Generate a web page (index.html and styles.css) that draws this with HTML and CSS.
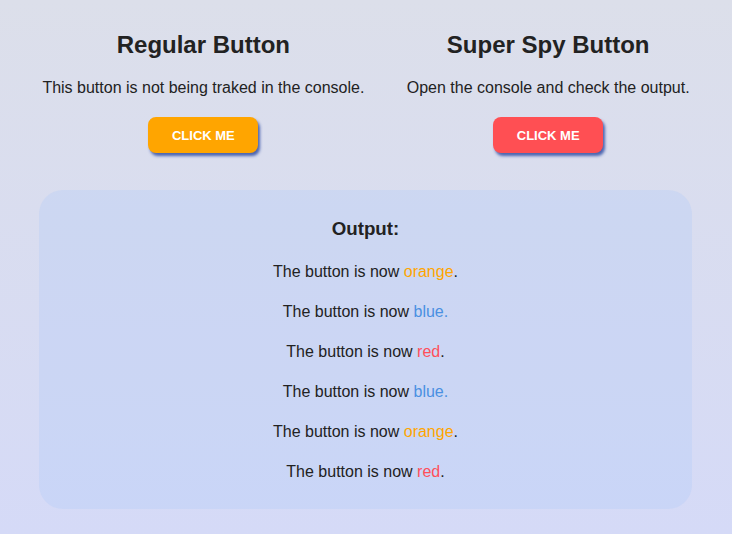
FILE: index.html
```html
<!DOCTYPE html>
<html lang="en">
<head>
<meta charset="utf-8">
<title>Spy Button</title>
<link rel="stylesheet" href="styles.css">
</head>
<body>
  <div class="buttons">
    <section class="col">
      <h2>Regular Button</h2>
      <p>This button is not being traked in the console.</p>
      <button class="btn btn-orange">Click me</button>
    </section>
    <section class="col">
      <h2>Super Spy Button</h2>
      <p>Open the console and check the output.</p>
      <button class="btn btn-red">Click me</button>
    </section>
  </div>
  <div class="output">
    <h3>Output:</h3>
    <p>The button is now <span class="c-orange">orange</span>.</p>
    <p>The button is now <span class="c-blue">blue.</span></p>
    <p>The button is now <span class="c-red">red</span>.</p>
    <p>The button is now <span class="c-blue">blue.</span></p>
    <p>The button is now <span class="c-orange">orange</span>.</p>
    <p>The button is now <span class="c-red">red</span>.</p>
  </div>
</body>
</html>
```

FILE: styles.css
```css
html, body {
  margin: 0;
  padding: 0;
}
body {
  min-height: 100vh;
  background: linear-gradient(to bottom, #dcdfea 0%, #d5daf7 100%);
  font-family: "Liberation Sans", Arial, sans-serif;
  color: #222;
  padding-top: 31px;
  box-sizing: border-box;
}
.buttons {
  display: flex;
  justify-content: space-evenly;
}
.col {
  display: flex;
  flex-direction: column;
  align-items: center;
}
.col h2 {
  margin: 0;
  font-size: 24px;
  line-height: 28px;
  font-weight: bold;
}
.col p {
  margin: 18px 0 18px;
  font-size: 16px;
  line-height: 22px;
}
.btn {
  width: 110px;
  height: 36px;
  border: none;
  border-radius: 8px;
  color: #fff;
  font-family: "Liberation Sans", Arial, sans-serif;
  font-weight: bold;
  font-size: 13px;
  text-transform: uppercase;
  box-shadow: 2px 3px 3px rgba(40, 70, 160, 0.8);
}
.btn-orange { background: #ffa500; }
.btn-red { background: #ff4f53; }
.output {
  margin: 37px 40px 0 39px;
  background: rgba(177, 203, 250, 0.3);
  border-radius: 24px;
  padding: 27px 20px 9px;
  text-align: center;
}
.output h3 {
  margin: 0 0 19px;
  font-size: 18.72px;
  line-height: 24px;
}
.output p {
  margin: 16px 0;
  font-size: 16px;
  line-height: 24px;
}
.c-orange { color: #ffa500; }
.c-blue { color: #4a90e2; }
.c-red { color: #ff4f5a; }
```
